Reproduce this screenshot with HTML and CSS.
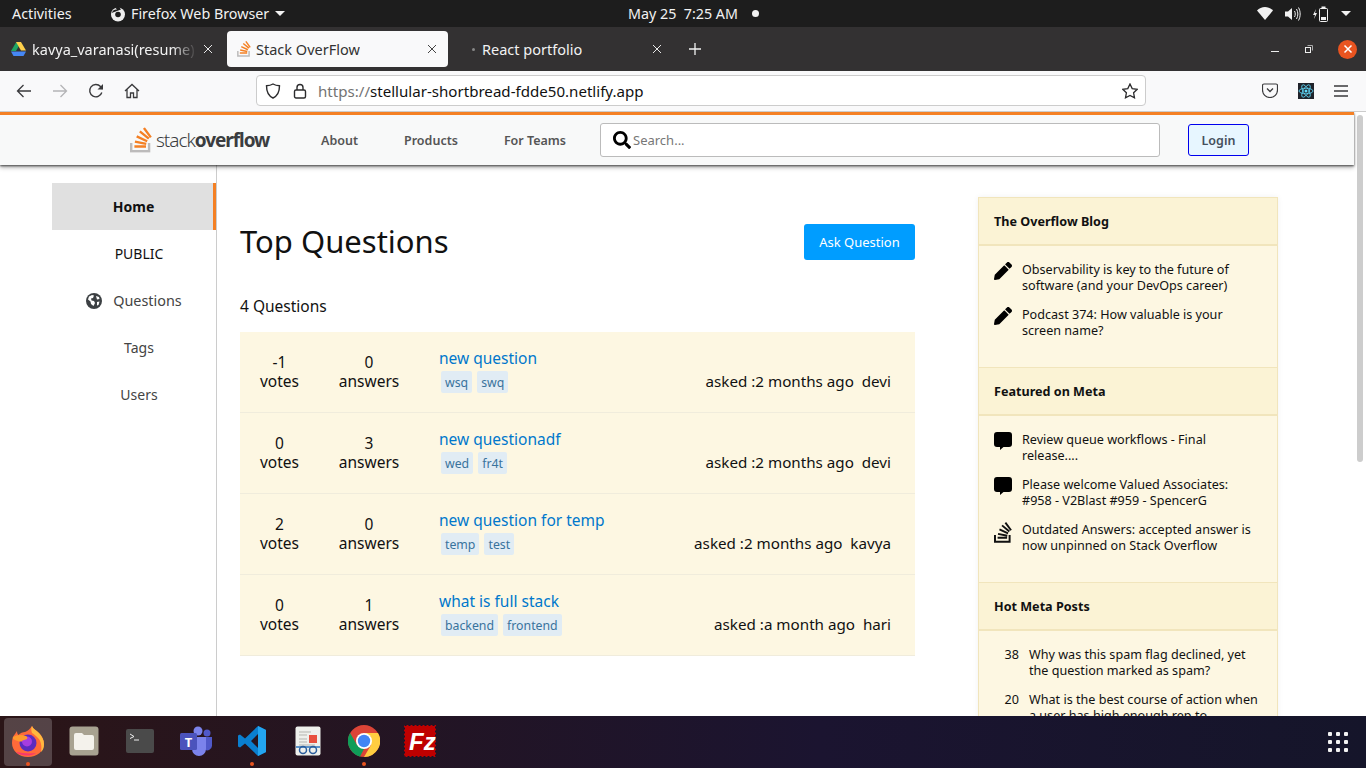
FILE: index.html
```html
<!DOCTYPE html>
<html lang="en">
<head>
    <meta charset="UTF-8">
    <meta name="viewport" content="width=device-width, initial-scale=1.0">
    <title>Stack OverFlow</title>
    <link rel="stylesheet" href="styles.css">
</head>
<body>
    <svg class="defs" width="0" height="0">
        <symbol id="so-mark" viewBox="0 0 32 37">
            <path fill="#bcbbbb" d="M26 33v-10h3.500v13.500H0V23h3.500v10z"/>
            <path fill="#f48024" d="M6.800 22.500l16.500 3.400.7-3.300-16.500-3.400zM9 14.700l15.300 7.100 1.400-3.100-15.300-7.100zM13.200 7.100l13 10.800 2.200-2.600-13-10.800zM21.600 0l-2.700 2 10.100 13.600 2.700-2zM6.400 29.600h16.900v-3.400H6.400z"/>
        </symbol>
        <symbol id="pen" viewBox="0 0 512 512">
            <path d="M497.900 142.100l-46.100 46.100c-4.700 4.700-12.300 4.700-17 0l-111-111c-4.700-4.700-4.700-12.300 0-17l46.100-46.100c18.700-18.700 49.100-18.700 67.900 0l60.100 60.100c18.800 18.700 18.800 49.100 0 67.900zM284.200 99.800L21.600 362.400.4 483.900c-2.900 16.400 11.400 30.600 27.800 27.800l121.500-21.300 262.600-262.600c4.700-4.700 4.700-12.300 0-17l-111-111c-4.800-4.700-12.400-4.700-17.100 0z"/>
        </symbol>
        <symbol id="bubble" viewBox="0 0 18 18">
            <path d="M3 0h12a3 3 0 0 1 3 3v9a3 3 0 0 1-3 3H9.500L6 18v-3H3a3 3 0 0 1-3-3V3a3 3 0 0 1 3-3z"/>
        </symbol>
    </svg>

    <!-- ubuntu top bar -->
    <div class="topbar">
        <div class="topbar-left">
            <span class="activities">Activities</span>
            <svg class="app-icon" width="16" height="16" viewBox="0 0 16 16"><circle cx="8" cy="8.500" r="7" fill="#eee"/><circle cx="8" cy="8.500" r="2.800" fill="#1d1d1d"/><path d="M1.500 7C3 4 5 3 7 3.500L5 1.500 9 .5l2 3-4 1.500z" fill="#1d1d1d"/></svg>
            <span class="app-name">Firefox Web Browser</span>
            <span class="caret"></span>
        </div>
        <div class="clock">May 25&nbsp;&nbsp;7:25 AM</div>
        <span class="notify-dot"></span>
        <div class="tray">
            <svg width="16" height="13" viewBox="0 0 16 13"><path d="M0 3.500C2 1.500 5 0 8 0s6 1.500 8 3.500L8 13z" fill="#f2f2f2"/></svg>
            <svg width="16" height="16" viewBox="0 0 16 16"><path d="M0 5.500h3L7 2v12l-4-3.500H0z" fill="#f2f2f2"/><path d="M9.500 5c1 1.800 1 4.200 0 6M11.500 3c1.800 3 1.800 7 0 10M13.500 1.500c2.200 4 2.200 9 0 13" fill="none" stroke="#f2f2f2" stroke-width="1"/></svg>
            <svg width="16" height="16" viewBox="0 0 16 16"><path d="M3 3L0 9h2l-1 4 3-6H2z" fill="#f2f2f2"/><rect x="6.500" y="2.500" width="8" height="13" rx="1" fill="none" stroke="#f2f2f2"/><rect x="8.500" y="0.500" width="4" height="2" fill="#f2f2f2"/><rect x="8" y="11" width="5" height="3" fill="#f2f2f2"/></svg>
            <span class="caret tray-caret"></span>
        </div>
    </div>

    <!-- firefox tabs -->
    <div class="tabbar">
        <div class="tab tab-drive">
            <svg width="15" height="14" viewBox="0 0 15 14"><path d="M5 0h5L5 8.500H0z" fill="#1fa463" transform="translate(0 .5)"/><path d="M5 0h5l5 8.500h-5z" fill="#ffd04b"/><path d="M0 9.500h15L12.500 14h-10z" fill="#4687f4"/></svg>
            <span class="tab-title fade">kavya_varanasi(resume) (</span>
            <svg class="tab-close" width="10" height="10" viewBox="0 0 10 10"><path d="M1 1l8 8M9 1l-8 8" stroke="#e8e8e8"/></svg>
        </div>
        <div class="tab tab-active">
            <svg width="14" height="16" viewBox="0 0 32 37"><use href="#so-mark"/></svg>
            <span class="tab-title">Stack OverFlow</span>
            <svg class="tab-close" width="10" height="10" viewBox="0 0 10 10"><path d="M1 1l8 8M9 1l-8 8" stroke="#444"/></svg>
        </div>
        <div class="tab tab-react">
            <span class="tab-dot"></span>
            <span class="tab-title">React portfolio</span>
            <svg class="tab-close" width="10" height="10" viewBox="0 0 10 10"><path d="M1 1l8 8M9 1l-8 8" stroke="#e8e8e8"/></svg>
        </div>
        <svg class="new-tab" width="12" height="12" viewBox="0 0 12 12"><path d="M6 0v12M0 6h12" stroke="#f2f2f2" stroke-width="1.300"/></svg>
        <div class="window-btns">
            <span class="win-min"></span>
            <svg width="8" height="8" viewBox="0 0 8 8"><path d="M2.500.5h5v5" fill="none" stroke="#aaa"/><rect x=".5" y="2.500" width="5" height="5" fill="none" stroke="#eee"/></svg>
            <span class="win-close">
                <svg width="10" height="10" viewBox="0 0 10 10"><path d="M1.500 1.500l7 7M8.500 1.500l-7 7" stroke="#fff" stroke-width="1.500"/></svg>
            </span>
        </div>
    </div>

    <!-- firefox toolbar -->
    <div class="toolbar">
        <div class="nav-btns">
            <svg width="16" height="16" viewBox="0 0 16 16"><path d="M15 8H1.500M7.500 2l-6 6 6 6" fill="none" stroke="#3a3a3c" stroke-width="1.300"/></svg>
            <svg width="16" height="16" viewBox="0 0 16 16"><path d="M1 8h13.500M8.500 2l6 6-6 6" fill="none" stroke="#b4b4b6" stroke-width="1.300"/></svg>
            <svg width="16" height="16" viewBox="0 0 16 16"><path d="M13.800 9.500A6.200 6.200 0 1 1 12.500 3.500L14.500 6" fill="none" stroke="#3a3a3c" stroke-width="1.400"/><path d="M15 1v5.500H9.500z" fill="#3a3a3c"/></svg>
            <svg width="16" height="16" viewBox="0 0 16 16"><path d="M1 8l7-6.500L15 8M3 6.500V14.500h3.500V10h3v4.500H13V6.500" fill="none" stroke="#3a3a3c" stroke-width="1.300"/></svg>
        </div>
        <div class="urlbar">
            <svg width="16" height="16" viewBox="0 0 16 16"><path d="M8 1c2 1.200 4 1.700 6.500 1.800C14.500 9 12.500 13 8 15 3.500 13 1.500 9 1.500 2.800 4 2.700 6 2.200 8 1z" fill="none" stroke="#2b2b2d" stroke-width="1.400"/></svg>
            <svg width="14" height="16" viewBox="0 0 14 16"><rect x="1.500" y="7" width="11" height="8" rx="1.500" fill="none" stroke="#2b2b2d" stroke-width="1.400"/><path d="M4 7V4.500a3 3 0 0 1 6 0V7" fill="none" stroke="#2b2b2d" stroke-width="1.400"/></svg>
            <span class="url"><span class="url-scheme">https://</span>stellular-shortbread-fdde50.netlify.app</span>
            <svg class="star" width="16" height="16" viewBox="0 0 16 16"><path d="M8 1l2.200 4.600 5 .7-3.600 3.500.9 5L8 12.400l-4.500 2.400.9-5L.8 6.300l5-.7z" fill="none" stroke="#2b2b2d" stroke-width="1.300"/></svg>
        </div>
        <div class="tool-btns">
            <svg width="16" height="15" viewBox="0 0 16 15"><path d="M2 1h12a1.500 1.500 0 0 1 1.500 1.500V7A7.500 7.500 0 0 1 .5 7V2.500A1.500 1.500 0 0 1 2 1z" fill="none" stroke="#3a3a3c" stroke-width="1.200"/><path d="M5 5.500L8 8.500l3-3" fill="none" stroke="#3a3a3c" stroke-width="1.300"/></svg>
            <svg class="react-ext" width="16" height="16" viewBox="0 0 16 16"><rect width="16" height="16" fill="#20232a"/><g fill="none" stroke="#61dafb" stroke-width=".8"><ellipse cx="8" cy="8" rx="7" ry="2.800"/><ellipse cx="8" cy="8" rx="7" ry="2.800" transform="rotate(60 8 8)"/><ellipse cx="8" cy="8" rx="7" ry="2.800" transform="rotate(120 8 8)"/></g><circle cx="8" cy="8" r="1.500" fill="#61dafb"/></svg>
            <svg width="14" height="12" viewBox="0 0 14 12"><path d="M0 1h14M0 6h14M0 11h14" stroke="#3a3a3c" stroke-width="1.300"/></svg>
        </div>
    </div>

    <div class="viewport">
        <div class="page">
            <header class="navbar">
                <a class="logo">
                    <svg width="22" height="28" viewBox="0 0 32 37"><use href="#so-mark"/></svg>
                    <span class="logo-text">stack<b>overflow</b></span>
                </a>
                <nav class="nav-links">
                    <a>About</a>
                    <a>Products</a>
                    <a>For Teams</a>
                </nav>
                <div class="search">
                    <svg width="18" height="18" viewBox="0 0 512 512"><path d="M505 442.700L405.300 343c-4.500-4.500-10.600-7-17-7H372c27.600-35.300 44-79.700 44-128C416 93.100 322.900 0 208 0S0 93.100 0 208s93.100 208 208 208c48.300 0 92.700-16.400 128-44v16.300c0 6.400 2.500 12.500 7 17l99.700 99.700c9.400 9.400 24.600 9.400 33.900 0l28.300-28.300c9.400-9.400 9.400-24.600.1-34zM208 336c-70.700 0-128-57.200-128-128 0-70.700 57.200-128 128-128 70.700 0 128 57.200 128 128 0 70.700-57.200 128-128 128z"/></svg>
                    <span>Search...</span>
                </div>
                <button class="login">Login</button>
            </header>

            <div class="page-body">
                <aside class="left-sidebar">
                    <a class="side-item side-home">Home</a>
                    <a class="side-item side-public">PUBLIC</a>
                    <a class="side-item side-questions">
                        <svg width="16" height="16" viewBox="0 0 16 16"><circle cx="8" cy="8" r="8" fill="#3c4043"/><path d="M3 3.500l3-1.500 2 .5-1 2.500-2 .5.500 2 2.500.5 1 2-1.500 3L5 11 4.500 8.500 2 6.500zM10 3l3 1 .5 2-2.500.5zM11 9l2.500-.5-1 3.500-1.500.5z" fill="#fff"/></svg>
                        Questions
                    </a>
                    <a class="side-item">Tags</a>
                    <a class="side-item">Users</a>
                </aside>

                <main class="main">
                    <div class="main-head">
                        <h1>Top Questions</h1>
                        <button class="ask">Ask Question</button>
                    </div>
                    <div class="q-count">4 Questions</div>
                    <div class="q-list">
                        <div class="q-row">
                            <div class="stat">-1<br>votes</div>
                            <div class="stat">0<br>answers</div>
                            <div class="q-main">
                                <a class="q-title">new question</a>
                                <div class="tags"><span>wsq</span><span>swq</span></div>
                            </div>
                            <div class="q-meta">asked :2 months ago&nbsp;&nbsp;devi</div>
                        </div>
                        <div class="q-row">
                            <div class="stat">0<br>votes</div>
                            <div class="stat">3<br>answers</div>
                            <div class="q-main">
                                <a class="q-title">new questionadf</a>
                                <div class="tags"><span>wed</span><span>fr4t</span></div>
                            </div>
                            <div class="q-meta">asked :2 months ago&nbsp;&nbsp;devi</div>
                        </div>
                        <div class="q-row">
                            <div class="stat">2<br>votes</div>
                            <div class="stat">0<br>answers</div>
                            <div class="q-main">
                                <a class="q-title">new question for temp</a>
                                <div class="tags"><span>temp</span><span>test</span></div>
                            </div>
                            <div class="q-meta">asked :2 months ago&nbsp;&nbsp;kavya</div>
                        </div>
                        <div class="q-row">
                            <div class="stat">0<br>votes</div>
                            <div class="stat">1<br>answers</div>
                            <div class="q-main">
                                <a class="q-title">what is full stack</a>
                                <div class="tags"><span>backend</span><span>frontend</span></div>
                            </div>
                            <div class="q-meta">asked :a month ago&nbsp;&nbsp;hari</div>
                        </div>
                    </div>
                </main>

                <aside class="right-sidebar">
                    <div class="widget">
                        <div class="w-head">The Overflow Blog</div>
                        <div class="w-body">
                            <div class="w-item">
                                <svg width="18" height="18"><use href="#pen"/></svg>
                                <p>Observability is key to the future of software (and your DevOps career)</p>
                            </div>
                            <div class="w-item">
                                <svg width="18" height="18"><use href="#pen"/></svg>
                                <p>Podcast 374: How valuable is your screen name?</p>
                            </div>
                        </div>
                        <div class="w-head">Featured on Meta</div>
                        <div class="w-body">
                            <div class="w-item">
                                <svg width="18" height="18"><use href="#bubble"/></svg>
                                <p>Review queue workflows - Final release....</p>
                            </div>
                            <div class="w-item">
                                <svg width="18" height="18"><use href="#bubble"/></svg>
                                <p>Please welcome Valued Associates: #958 - V2Blast #959 - SpencerG</p>
                            </div>
                            <div class="w-item">
                                <svg width="18" height="21" viewBox="0 0 32 37"><path fill="#111" d="M26 33v-10h3.500v13.500H0V23h3.500v10z"/><path fill="#111" d="M6.800 22.500l16.500 3.400.7-3.300-16.500-3.400zM9 14.700l15.300 7.100 1.400-3.100-15.300-7.100zM13.200 7.100l13 10.800 2.200-2.600-13-10.800zM21.600 0l-2.700 2 10.100 13.600 2.700-2zM6.400 29.600h16.900v-3.400H6.400z"/></svg>
                                <p>Outdated Answers: accepted answer is now unpinned on Stack Overflow</p>
                            </div>
                        </div>
                        <div class="w-head">Hot Meta Posts</div>
                        <div class="w-body">
                            <div class="w-item hot">
                                <span class="hot-num">38</span>
                                <p>Why was this spam flag declined, yet the question marked as spam?</p>
                            </div>
                            <div class="w-item hot">
                                <span class="hot-num">20</span>
                                <p>What is the best course of action when a user has high enough rep to</p>
                            </div>
                        </div>
                    </div>
                </aside>
            </div>
        </div>
        <div class="scrollbar"><div class="scroll-thumb"></div></div>
    </div>

    <!-- ubuntu dock -->
    <div class="dock">
        <div class="dock-item dock-active">
            <svg width="32" height="32" viewBox="0 0 32 32">
                <path d="M20 1c1 3 4 4 7 7 3 3 5 7 5 11 0 7-7 13-16 13S0 26 0 18c0-4 1-7 3-9l2-3c0 2 .5 3 1.500 4C8 8 11 7 13 7c3-1 5-3 7-6z" fill="#ff6a3a"/>
                <path d="M20 1c1 3 4 4 7 7 3 3 5 7 5 11 0 4-1 6-3 8 1-6 0-11-3-14-2-2-4-4-6-5-1-3-1-5 0-7z" fill="#ffb93f"/>
                <circle cx="16" cy="18" r="8.500" fill="#5b2bbf"/>
                <circle cx="15" cy="16.500" r="5" fill="#a63de0"/>
                <path d="M1 12c3-2 8-3 13-1 1 .5 2 1.500 1 3-1 1-5 1-5 2.500-3 .5-6-1-8-2-1-.5-1.500-1.500-1-2.500z" fill="#ff9a2e"/>
                <path d="M4 27c4 4 14 5 20 1-7 1-14 0-20-1z" fill="#f8386c"/>
            </svg>
            <span class="run-dot"></span>
        </div>
        <div class="dock-item">
            <svg width="30" height="30" viewBox="0 0 30 30"><rect width="29" height="29" x=".5" y=".5" rx="3" fill="#a8a291"/><path d="M5 9a2 2 0 0 1 2-2h6l2 2h8a2 2 0 0 1 2 2v11a2 2 0 0 1-2 2H7a2 2 0 0 1-2-2z" fill="#f4f2ec"/></svg>
        </div>
        <div class="dock-item">
            <svg width="28" height="24" viewBox="0 0 28 24"><rect width="28" height="24" rx="2" fill="#4a4a4a"/><path d="M4 5l4 2.500-4 2" fill="none" stroke="#eee"/><path d="M8 11h5" stroke="#eee"/></svg>
        </div>
        <div class="dock-item">
            <svg width="32" height="30" viewBox="0 0 32 30"><circle cx="18" cy="5" r="4.500" fill="#7b83eb"/><circle cx="27" cy="7" r="3.500" fill="#5059c9"/><path d="M22 11h10v9a5 5 0 0 1-7 4z" fill="#5059c9"/><path d="M10 11h16v12a7 7 0 0 1-14 0z" fill="#7b83eb"/><rect y="7" width="17" height="17" rx="1.500" fill="#4b53bc"/><text class="teams-t" x="8.500" y="20.500">T</text></svg>
        </div>
        <div class="dock-item">
            <svg width="28" height="30" viewBox="0 0 28 30"><path d="M20 0l8 4v22l-8 4L7 17.500 2 21.500 0 20.500V9.500l2-1 5 4zM20 8l-7 7 7 7z" fill="#0a7fd0"/><path d="M20 0l8 4v22l-8 4z" fill="#23a5f0"/></svg>
            <span class="run-dot"></span>
        </div>
        <div class="dock-item">
            <svg width="26" height="30" viewBox="0 0 26 30"><rect width="25" height="29" x=".5" y=".5" rx="2" fill="#eef0ec"/><path d="M4 6h12M4 9h8M4 13h8M4 16h8M4 19h16" stroke="#b5b5b0"/><rect x="14" y="9" width="8" height="8" fill="#e8503f"/><rect y="20" x="1" width="24" height="2" fill="#5d93c9"/><circle cx="8" cy="24" r="3.500" fill="none" stroke="#2a5d9c" stroke-width="1.500"/><circle cx="18" cy="24" r="3.500" fill="none" stroke="#2a5d9c" stroke-width="1.500"/></svg>
        </div>
        <div class="dock-item">
            <svg width="32" height="32" viewBox="0 0 32 32"><circle cx="16" cy="16" r="16" fill="#db4437"/><path d="M16 32A16 16 0 0 1 2.100 8L9 20l7 4-4 7.600z" fill="#0f9d58"/><path d="M16 8h14A16 16 0 0 1 16 32l7-12 0-8z" fill="#ffcd40"/><circle cx="16" cy="16" r="8" fill="#fff"/><circle cx="16" cy="16" r="6.200" fill="#4285f4"/></svg>
            <span class="run-dot"></span>
        </div>
        <div class="dock-item">
            <svg width="32" height="32" viewBox="0 0 32 32"><rect width="32" height="32" fill="#bf0000"/><rect x=".5" y=".5" width="31" height="31" fill="none" stroke="#14142a" stroke-dasharray="2 2"/><text class="fz" x="5" y="25">Fz</text></svg>
        </div>
        <svg class="show-apps" width="20" height="20" viewBox="0 0 20 20"><g fill="#f2f2f2"><rect width="4" height="4" rx="1"/><rect x="8" width="4" height="4" rx="1"/><rect x="16" width="4" height="4" rx="1"/><rect y="8" width="4" height="4" rx="1"/><rect x="8" y="8" width="4" height="4" rx="1"/><rect x="16" y="8" width="4" height="4" rx="1"/><rect y="16" width="4" height="4" rx="1"/><rect x="8" y="16" width="4" height="4" rx="1"/><rect x="16" y="16" width="4" height="4" rx="1"/></g></svg>
    </div>
</body>
</html>
```

FILE: styles.css
```css
* {
    box-sizing: border-box;
}
html, body {
    margin: 0;
    height: 768px;
    overflow: hidden;
}
body {
    font-family: "Noto Sans", "Open Sans", sans-serif;
    display: flex;
    flex-direction: column;
    color: #111;
    background: #fff;
}
.defs {
    display: none;
}
p {
    margin: 0;
}
button {
    font-family: inherit;
}

/* top bar */
.topbar {
    height: 27px;
    flex: none;
    background: #1d1d1d;
    color: #f2f2f2;
    font-size: 14.300px;
    display: flex;
    align-items: center;
    padding-left: 12px;
}
.topbar-left {
    display: flex;
    align-items: center;
    width: 616px;
}
.activities {
    width: 98px;
}
.app-icon {
    margin-right: 5px;
}
.caret {
    width: 0;
    height: 0;
    border-left: 5px solid transparent;
    border-right: 5px solid transparent;
    border-top: 5px solid #f2f2f2;
    margin-left: 6px;
}
.notify-dot {
    width: 7px;
    height: 7px;
    border-radius: 50%;
    background: #f2f2f2;
    margin-left: 14px;
}
.tray {
    margin-left: auto;
    display: flex;
    align-items: center;
    gap: 12px;
    padding-right: 15px;
}
.tray-caret {
    margin-left: 0;
}

/* tabs */
.tabbar {
    height: 44px;
    flex: none;
    background: #333132;
    display: flex;
    align-items: center;
    font-size: 14.500px;
    color: #f2f2f2;
}
.tab {
    height: 36px;
    display: flex;
    align-items: center;
    border-radius: 4px;
    position: relative;
}
.tab-title {
    margin-left: 6px;
    white-space: nowrap;
    overflow: hidden;
}
.tab-close {
    margin-left: auto;
}
.tab-drive {
    width: 223px;
    padding: 0 10px 0 11px;
    margin-right: 4px;
}
.fade {
    width: 165px;
    -webkit-mask-image: linear-gradient(to right, #000 85%, transparent);
    mask-image: linear-gradient(to right, #000 85%, transparent);
}
.tab-active {
    width: 221px;
    background: #f9f9fa;
    color: #333;
    padding: 0 11px 0 10px;
}
.tab-active .tab-title {
    margin-left: 5px;
}
.tab-react {
    width: 225px;
    padding: 0 11px 0 24px;
}
.tab-dot {
    width: 3px;
    height: 3px;
    border-radius: 50%;
    background: #888;
}
.tab-react .tab-title {
    margin-left: 7px;
}
.new-tab {
    margin-left: 16px;
}
.window-btns {
    margin-left: auto;
    display: flex;
    align-items: center;
    padding-right: 9px;
    gap: 26px;
}
.win-min {
    width: 8px;
    height: 1px;
    background: #eee;
    margin-top: 4px;
}
.win-close {
    width: 19px;
    height: 19px;
    border-radius: 50%;
    background: #e95420;
    display: flex;
    align-items: center;
    justify-content: center;
    margin-left: -1px;
}

/* toolbar */
.toolbar {
    height: 41px;
    flex: none;
    background: #f9f9fa;
    border-bottom: 1px solid #ccc;
    display: flex;
    align-items: center;
    padding-bottom: 1px;
}
.nav-btns {
    width: 256px;
    display: flex;
    gap: 20px;
    padding-left: 16px;
    align-items: center;
}
.urlbar {
    width: 890px;
    height: 31px;
    background: #fff;
    border: 1px solid #ccc;
    border-radius: 4px;
    display: flex;
    align-items: center;
    gap: 12px;
    padding: 0 7px 0 8px;
}
.url {
    font-size: 15.100px;
    color: #111;
    margin-left: -1px;
}
.url-scheme {
    color: #737373;
}
.star {
    margin-left: auto;
}
.tool-btns {
    flex: 1;
    display: flex;
    align-items: center;
    gap: 20px;
    padding-left: 116px;
}

/* page */
.viewport {
    flex: 1;
    display: flex;
    min-height: 0;
    overflow: hidden;
}
.page {
    flex: 1;
    min-width: 0;
}
.scrollbar {
    width: 12px;
    background: #fff;
    padding: 3px 3px 0 3px;
}
.scroll-thumb {
    height: 347px;
    background: #cdcdcd;
    border-radius: 3px;
}
.navbar {
    height: 53px;
    background: #f8f9f9;
    border-top: 3px solid #f48024;
    box-shadow: 0 1px 2px rgba(0,0,0,.65), 0 3px 4px rgba(0,0,0,.25);
    display: flex;
    align-items: center;
    padding-left: 130px;
    position: relative;
}
.logo {
    display: flex;
    align-items: center;
    width: 191px;
    gap: 4px;
}
.logo-text {
    font-size: 19px;
    font-weight: 300;
    color: #3b3d40;
    letter-spacing: -1.050px;
}
.logo-text b {
    font-weight: 700;
}
.nav-links {
    display: flex;
    gap: 46px;
    width: 279px;
    font-size: 12.500px;
    font-weight: 600;
    color: #555;
}
.search {
    width: 560px;
    height: 34px;
    background: #fff;
    border: 1px solid #bbb;
    border-radius: 3px;
    display: flex;
    align-items: center;
    padding-left: 12px;
    gap: 2px;
    font-size: 13px;
    color: #777;
}
.login {
    width: 61px;
    height: 32px;
    margin-left: 28px;
    background: #e7f6ff;
    border: 1px solid #0000ee;
    border-radius: 3px;
    color: #444f5c;
    font-size: 12.500px;
    font-weight: 600;
}
.page-body {
    display: flex;
    height: 551px;
}

/* left sidebar */
.left-sidebar {
    width: 217px;
    flex: none;
    border-right: 1px solid #ccc;
    padding: 18px 0 0 52px;
}
.side-item {
    height: 47px;
    display: flex;
    align-items: center;
    justify-content: center;
    font-size: 14px;
    color: #444;
    padding-left: 10px;
    gap: 11px;
}
.side-home {
    background: #e0e0e0;
    border-right: 3px solid #f48024;
    font-weight: 700;
    color: #111;
    padding: 0 0 0 2px;
}
.side-public {
    color: #111;
}
.side-questions {
    padding: 0;
    font-size: 14.400px;
}

/* main */
.main {
    width: 698px;
    flex: none;
    padding: 59px 0 0 23px;
}
.main-head {
    display: flex;
    justify-content: space-between;
    align-items: center;
    height: 36px;
}
.main-head h1 {
    font-size: 31px;
    font-weight: 400;
    margin: -2px 0 0;
    color: #111;
}
.ask {
    width: 111px;
    height: 36px;
    background: #009dff;
    color: #fff;
    border: none;
    border-radius: 3px;
    font-size: 13px;
}
.q-count {
    font-size: 15.500px;
    margin-top: 35px;
    height: 37px;
}
.q-list {
    background: #fdf7e2;
}
.q-row {
    height: 81px;
    border-bottom: 1px solid #f0ecdc;
    display: grid;
    grid-template-columns: 79px 100px 1fr auto;
    align-items: center;
    padding-right: 24px;
}
.stat {
    text-align: center;
    font-size: 15.500px;
    line-height: 19px;
    margin-top: -1px;
}
.q-main {
    padding-left: 20px;
    margin-top: -3px;
}
.q-title {
    font-size: 15.500px;
    color: #0077cc;
    display: block;
    line-height: 20px;
}
.tags {
    display: flex;
    gap: 5px;
    margin: 3px 0 0 2px;
}
.tags span {
    background: #e1ecf4;
    color: #39739d;
    font-size: 12.300px;
    line-height: 23px;
    height: 22px;
    padding: 0 4px;
    border-radius: 2px;
}
.q-meta {
    font-size: 15.200px;
    align-self: end;
    margin-bottom: 21px;
}

/* right sidebar */
.right-sidebar {
    width: 300px;
    flex: none;
    margin: 32px 0 0 63px;
}
.widget {
    background: #fdf7e2;
    border: 1px solid #f1e5bc;
    box-shadow: 0 0 6px rgba(0,0,0,.06);
    font-size: 12.600px;
    line-height: 16px;
}
.w-head {
    height: 48px;
    background: #fbf3d5;
    border-bottom: 2px solid #f1e5bc;
    display: flex;
    align-items: center;
    padding: 2px 0 0 15px;
    font-weight: 700;
}
.w-body {
    padding: 16px 17px 15px 15px;
    border-bottom: 1px solid #f1e5bc;
}
.w-item {
    display: flex;
    gap: 10px;
    margin-bottom: 13px;
    min-height: 32px;
}
.w-item svg {
    flex: none;
}
.hot-num {
    width: 25px;
    flex: none;
    text-align: right;
}
.dock {
    height: 52px;
    flex: none;
    background: linear-gradient(to right, #2b1517, #1b1430 60%, #15152a);
    display: flex;
    align-items: center;
    position: relative;
}
.dock-item {
    width: 56px;
    height: 52px;
    display: flex;
    align-items: center;
    justify-content: center;
    position: relative;
    padding-bottom: 2px;
}
.dock-active::before {
    content: "";
    position: absolute;
    left: 4px;
    top: 2px;
    width: 48px;
    height: 48px;
    border-radius: 4px;
    background: rgba(255,255,255,.2);
}
.dock-item svg {
    position: relative;
}
.run-dot {
    position: absolute;
    bottom: 2px;
    left: 26px;
    width: 4px;
    height: 4px;
    border-radius: 50%;
    background: #e95420;
}
.teams-t {
    font: 700 13px "Noto Sans", sans-serif;
    fill: #fff;
    text-anchor: middle;
}
.fz {
    font: italic 700 24px "Liberation Sans", sans-serif;
    fill: #fff;
}
.show-apps {
    margin-left: auto;
    margin-right: 18px;
}
```
